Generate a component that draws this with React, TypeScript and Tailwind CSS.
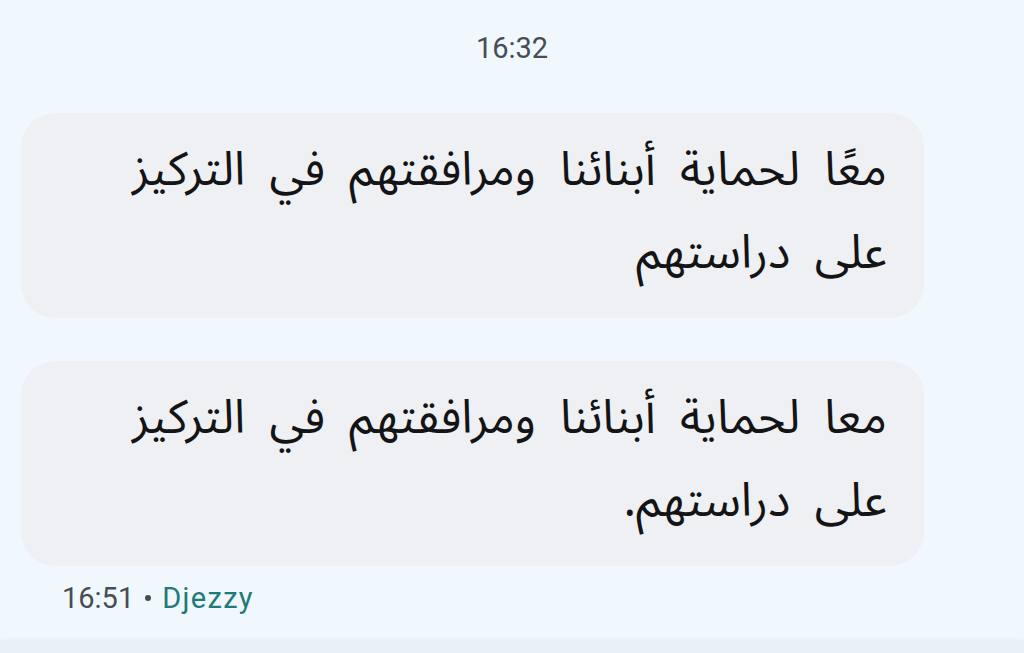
const arabic = { fontFamily: '"Noto Sans Arabic", "DejaVu Sans", sans-serif' };

function Bubble({ text }: { text: string }) {
  return (
    <div className="mx-[21px] h-[205px] w-[903px] rounded-[34px] bg-[#eff0f3] pt-[16px] pl-[40px] pr-[37px]">
      <p dir="rtl" className="text-[47px] leading-[83px] text-[#141416] [word-spacing:12px]" style={arabic}>
        {text}
      </p>
    </div>
  );
}

export default function App() {
  return (
    <div className="flex h-[653px] w-[1024px] flex-col overflow-hidden bg-[#f0f8fd] font-['Roboto',sans-serif]">
      <div className="pt-[30px] text-center text-[29px] leading-[36px] text-[#474d53]">16:32</div>
      <div className="mt-[47px] flex flex-col gap-[43px]">
        <Bubble text="معًا لحماية أبنائنا ومرافقتهم في التركيز على دراستهم" />
        <Bubble text="معا لحماية أبنائنا ومرافقتهم في التركيز على دراستهم." />
      </div>
      <div className="mt-[14px] flex items-center gap-[11px] pl-[62px] text-[29px] leading-[36px] text-[#474d53]">
        <span>16:51</span>
        <span className="h-[6px] w-[6px] rounded-full bg-[#474d53]" />
        <span className="tracking-[1.3px] text-[#1f7a78]">Djezzy</span>
      </div>
      <div className="mt-auto h-[12px] bg-[#e9f1f7] shadow-[0_-2px_4px_rgba(0,0,0,0.03)]" />
    </div>
  );
}
